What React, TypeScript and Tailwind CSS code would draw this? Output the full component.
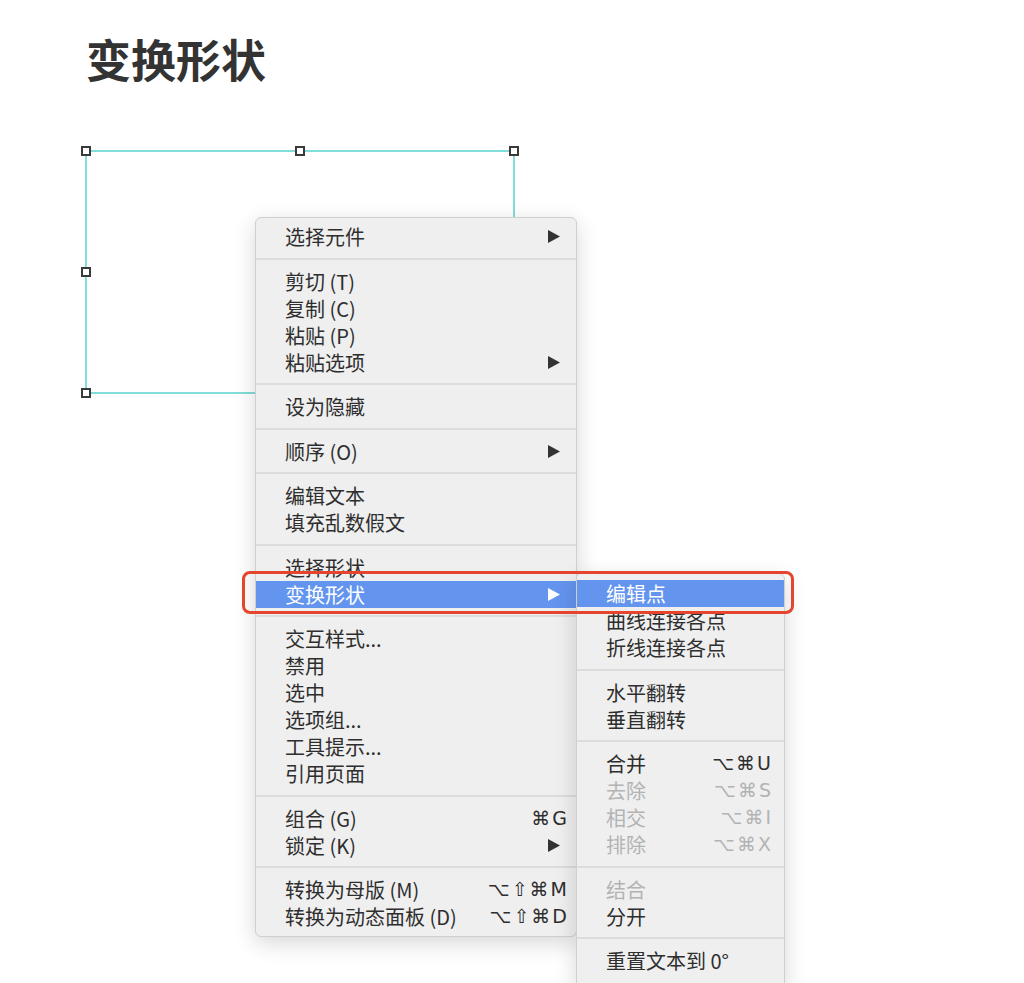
import React from 'react'

type Item = {
  label: string
  arrow?: boolean
  shortcut?: string
  active?: boolean
  disabled?: boolean
}

const mainMenu: Item[][] = [
  [{ label: '选择元件', arrow: true }],
  [
    { label: '剪切 (T)' },
    { label: '复制 (C)' },
    { label: '粘贴 (P)' },
    { label: '粘贴选项', arrow: true },
  ],
  [{ label: '设为隐藏' }],
  [{ label: '顺序 (O)', arrow: true }],
  [{ label: '编辑文本' }, { label: '填充乱数假文' }],
  [{ label: '选择形状' }, { label: '变换形状', arrow: true, active: true }],
  [
    { label: '交互样式...' },
    { label: '禁用' },
    { label: '选中' },
    { label: '选项组...' },
    { label: '工具提示...' },
    { label: '引用页面' },
  ],
  [{ label: '组合 (G)', shortcut: '⌘G' }, { label: '锁定 (K)', arrow: true }],
  [
    { label: '转换为母版 (M)', shortcut: '⌥⇧⌘M' },
    { label: '转换为动态面板 (D)', shortcut: '⌥⇧⌘D' },
  ],
]

const subMenu: Item[][] = [
  [{ label: '编辑点', active: true }, { label: '曲线连接各点' }, { label: '折线连接各点' }],
  [{ label: '水平翻转' }, { label: '垂直翻转' }],
  [
    { label: '合并', shortcut: '⌥⌘U' },
    { label: '去除', shortcut: '⌥⌘S', disabled: true },
    { label: '相交', shortcut: '⌥⌘I', disabled: true },
    { label: '排除', shortcut: '⌥⌘X', disabled: true },
  ],
  [{ label: '结合', disabled: true }, { label: '分开' }],
  [{ label: '重置文本到 0°' }],
]

function Arrow({ white }: { white?: boolean }) {
  return (
    <svg width="12" height="13" viewBox="0 0 12 13" className="shrink-0">
      <polygon points="0,0 12,6.5 0,13" fill={white ? '#ffffff' : '#333333'} />
    </svg>
  )
}

function Shortcut({ keys }: { keys: string }) {
  return (
    <span className="flex items-center gap-[2px] font-['DejaVu_Sans','Noto_Sans_CJK_SC',sans-serif] text-[19px] leading-[27px]">
      {Array.from(keys).map((k, i) => (
        <span key={i}>{k}</span>
      ))}
    </span>
  )
}

function MenuRow({ item, arrowPad, shortcutPad }: { item: Item; arrowPad: string; shortcutPad: string }) {
  const color = item.active ? 'bg-[#6394ee] text-white' : item.disabled ? 'text-[#b3b3b3]' : 'text-[#2e2e2e]'
  return (
    <div className={`flex h-[27px] items-center justify-between pl-[29px] ${item.arrow ? arrowPad : shortcutPad} ${color}`}>
      <span className="leading-[27px] whitespace-nowrap">{item.label}</span>
      {item.arrow && <Arrow white={item.active} />}
      {item.shortcut && <Shortcut keys={item.shortcut} />}
    </div>
  )
}

function Menu({ groups, className, arrowPad, shortcutPad }: { groups: Item[][]; className: string; arrowPad: string; shortcutPad: string }) {
  return (
    <div
      className={`absolute rounded-[6px] border border-[#cfcfcf] bg-[#efefef] shadow-[0_6px_22px_rgba(0,0,0,0.16)] text-[20px] font-['Noto_Sans_CJK_SC',sans-serif] ${className}`}
    >
      {groups.map((group, gi) => (
        <div key={gi}>
          {gi > 0 && (
            <div className="flex h-[17.5px] items-center">
              <div className="h-[2px] w-full bg-[#dcdcdc]" />
            </div>
          )}
          {group.map(item => (
            <MenuRow key={item.label} item={item} arrowPad={arrowPad} shortcutPad={shortcutPad} />
          ))}
        </div>
      ))}
    </div>
  )
}

const handles = [
  [86, 151],
  [300, 151],
  [514, 151],
  [86, 272],
  [514, 272],
  [86, 393],
  [300, 393],
  [514, 393],
]

export default function App() {
  return (
    <div className="relative h-[983px] w-full overflow-hidden bg-white font-['Noto_Sans_CJK_SC',sans-serif]">
      <h1 className="pl-[86px] pt-[36px] text-[45px] font-bold leading-[45px] text-[#333333]">变换形状</h1>

      {/* selected shape on canvas */}
      <div className="absolute left-[85px] top-[150px] h-[244px] w-[430px] border-2 border-[#80ddd9]" />
      {handles.map(([x, y]) => (
        <div
          key={`${x}-${y}`}
          className="absolute h-[10px] w-[10px] border-2 border-[#3a3a3a] bg-white"
          style={{ left: x - 5, top: y - 5 }}
        />
      ))}

      {/* context menu */}
      <Menu
        groups={mainMenu}
        className="left-[255px] top-[217px] w-[322px] pt-[5px] pb-[6px]"
        arrowPad="pr-[16px]"
        shortcutPad="pr-[9px]"
      />
      <Menu
        groups={subMenu}
        className="left-[576px] top-[573px] w-[209px] rounded-tl-[4px] pt-[6px] pb-[14px]"
        arrowPad="pr-[16px]"
        shortcutPad="pr-[13px]"
      />

      {/* callout */}
      <div className="absolute left-[242px] top-[571px] h-[43px] w-[552px] rounded-[8px] border-[3px] border-[#e5442d]" />
    </div>
  )
}
